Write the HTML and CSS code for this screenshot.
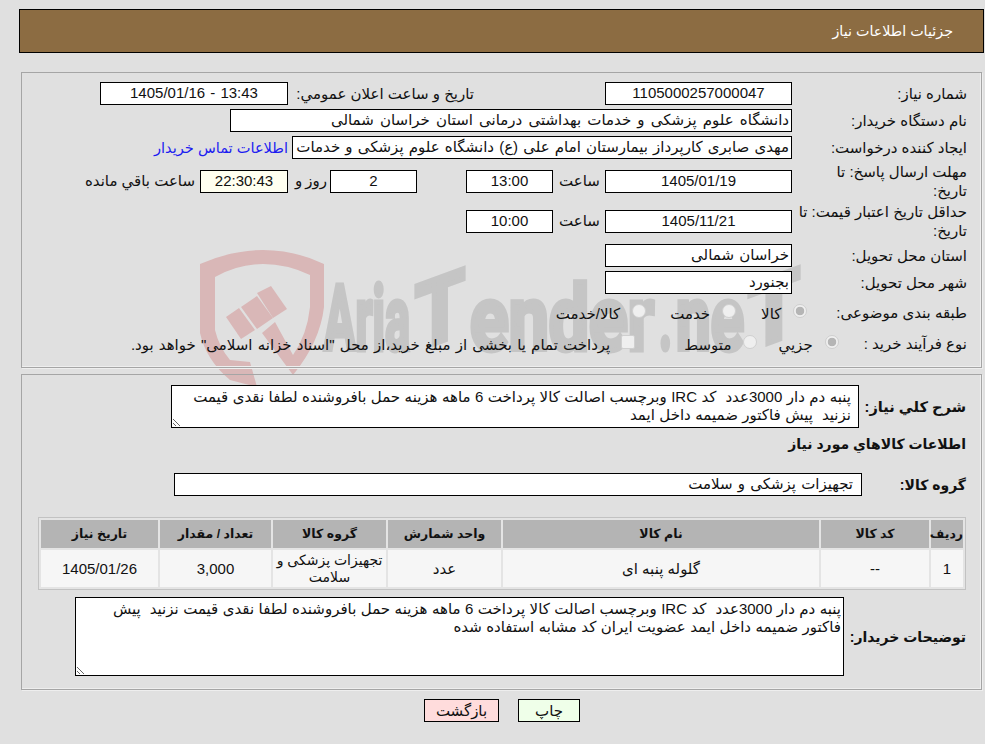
FILE: index.html
```html
<!DOCTYPE html>
<html lang="fa">
<head>
<meta charset="utf-8">
<title>جزئیات اطلاعات نیاز</title>
<link rel="stylesheet" href="styles.css">
</head>
<body>
<svg class="watermark" width="985" height="744" viewBox="0 0 985 744" aria-hidden="true">
  <path class="wm-shield" fill-rule="evenodd" d="M200 264Q232 250 263 250Q295 250 324 264V307Q320 342 293 375L262 333L275 322L293 355Q307 335 310 307V275Q287 264 263 264Q238 264 215 277V330Q219 347 230 360L250 362L257 387L230 380Q206 360 200 333Z"/>
  <polygon class="wm-shield" points="226,317 239,308 255,330 241,339"/>
  <polygon class="wm-shield" points="241,307 257,296 273,318 257,329"/>
  <polygon class="wm-shield" points="257,293 271,286 287,309 273,318"/>
  <text class="wm-text" x="324" y="350" textLength="86" lengthAdjust="spacingAndGlyphs">Aria</text>
  <text class="wm-text" x="415" y="350" textLength="50" lengthAdjust="spacingAndGlyphs" transform="skewY(-20) translate(0 152)">T</text>
  <text class="wm-text" x="470" y="350" textLength="184" lengthAdjust="spacingAndGlyphs">ender</text>
  <text class="wm-text" x="659" y="350" textLength="13" lengthAdjust="spacingAndGlyphs">.</text>
  <text class="wm-text" x="676" y="350" textLength="68" lengthAdjust="spacingAndGlyphs">ne</text>
  <text class="wm-text" x="748" y="350" textLength="52" lengthAdjust="spacingAndGlyphs" transform="skewY(-20) translate(0 273)">T</text>
</svg>

<main class="page" dir="rtl">
  <header class="title-bar">جزئیات اطلاعات نیاز</header>

  <section class="panel panel-info">
    <div class="row row-27">
      <div class="label">شماره نیاز:</div>
      <div class="field field-date center">1105000257000047</div>
      <div class="label-publish">تاریخ و ساعت اعلان عمومي:</div>
      <div class="field field-publish center"><bdi dir="ltr">1405/01/16 - 13:43</bdi></div>
    </div>
    <div class="row row-27">
      <div class="label">نام دستگاه خریدار:</div>
      <div class="field field-org">دانشگاه علوم پزشکی و خدمات بهداشتی درمانی استان خراسان شمالی</div>
    </div>
    <div class="row row-27">
      <div class="label">ایجاد کننده درخواست:</div>
      <div class="field field-creator">مهدی صابری کارپرداز بیمارستان امام علی (ع) دانشگاه علوم پزشکی و خدمات بهداشتی درمانی</div>
      <a class="contact" href="#">اطلاعات تماس خریدار</a>
    </div>
    <div class="row row-40">
      <div class="label">مهلت ارسال پاسخ: تا<br>تاریخ:</div>
      <div class="field field-date center">1405/01/19</div>
      <div class="time-word">ساعت</div>
      <div class="field field-time center">13:00</div>
      <div class="field field-days center">2</div>
      <div class="days-word">روز و</div>
      <div class="field field-remain center">22:30:43</div>
      <div class="remain-word">ساعت باقي مانده</div>
    </div>
    <div class="row row-40">
      <div class="label">حداقل تاریخ اعتبار قیمت: تا تاریخ:</div>
      <div class="field field-date center">1405/11/21</div>
      <div class="time-word">ساعت</div>
      <div class="field field-time center">10:00</div>
    </div>
    <div class="row row-29">
      <div class="label">استان محل تحویل:</div>
      <div class="field field-date">خراسان شمالی</div>
    </div>
    <div class="row row-25">
      <div class="label">شهر محل تحویل:</div>
      <div class="field field-date">بجنورد</div>
    </div>
    <div class="row row-36">
      <div class="label-auto">طبقه بندی موضوعی:</div>
      <span class="radio checked gap-first-a"></span><span class="opt-text">کالا</span>
      <span class="radio gap-next-a"></span><span class="opt-text">خدمت</span>
      <span class="radio gap-next-b"></span><span class="opt-text">کالا/خدمت</span>
    </div>
    <div class="row row-26">
      <div class="label-auto">نوع فرآیند خرید :</div>
      <span class="radio checked gap-first-b"></span><span class="opt-text">جزیي</span>
      <span class="radio gap-next-c"></span><span class="opt-text">متوسط</span>
      <span class="checkbox gap-next-d"></span><span class="opt-text opt-long">پرداخت تمام یا بخشی از مبلغ خرید،از محل "اسناد خزانه اسلامی" خواهد بود.</span>
    </div>
  </section>

  <section class="panel panel-items">
    <div class="row desc-row">
      <div class="label-bold">شرح كلي نياز:</div>
      <textarea class="memo memo-need" readonly>پنبه دم دار 3000عدد  کد IRC وبرچسب اصالت کالا پرداخت 6 ماهه هزینه حمل بافروشنده لطفا نقدی قیمت نزنید  پیش فاکتور ضمیمه داخل ایمد</textarea>
    </div>
    <h2 class="section-title">اطلاعات كالاهاي مورد نياز</h2>
    <div class="row group-row">
      <div class="label-group">گروه کالا:</div>
      <div class="field field-group">تجهیزات پزشکی و سلامت</div>
    </div>
    <table class="items">
      <colgroup>
        <col class="c-idx"><col class="c-code"><col class="c-name"><col class="c-unit"><col class="c-cat"><col class="c-qty"><col class="c-date">
      </colgroup>
      <thead>
        <tr><th>ردیف</th><th>کد کالا</th><th>نام کالا</th><th>واحد شمارش</th><th>گروه کالا</th><th>تعداد / مقدار</th><th>تاریخ نیاز</th></tr>
      </thead>
      <tbody>
        <tr><td>1</td><td>--</td><td>گلوله پنبه ای</td><td>عدد</td><td class="cell-nowrap">تجهیزات پزشکی و<br>سلامت</td><td>3,000</td><td>1405/01/26</td></tr>
      </tbody>
    </table>
    <div class="row buyer-row">
      <div class="label-buyer">توضیحات خریدار:</div>
      <textarea class="memo memo-buyer" readonly>پنبه دم دار 3000عدد  کد IRC وبرچسب اصالت کالا پرداخت 6 ماهه هزینه حمل بافروشنده لطفا نقدی قیمت نزنید  پیش فاکتور ضمیمه داخل ایمد عضویت ایران کد مشابه استفاده شده</textarea>
    </div>
  </section>

  <div class="actions">
    <button class="btn btn-print" type="button">چاپ</button>
    <button class="btn btn-back" type="button">بازگشت</button>
  </div>
</main>
</body>
</html>
```

FILE: styles.css
```css
* { box-sizing: border-box; }

html, body {
  margin: 0;
  padding: 0;
}

body {
  width: 985px;
  height: 744px;
  overflow: hidden;
  position: relative;
  background: #e0e0e0;
  color: #111;
  font-family: "Liberation Sans", "DejaVu Sans", sans-serif;
  font-size: 15px;
  line-height: 18px;
}

.watermark {
  position: absolute;
  left: 0;
  top: 0;
  z-index: 0;
}

.wm-shield { fill: #d9b7b7; }

.wm-text {
  fill: #c5c5c5;
  stroke: #c5c5c5;
  stroke-width: 5px;
  font-family: "Roboto", sans-serif;
  font-weight: 700;
  font-size: 91px;
}

.page {
  position: relative;
  z-index: 1;
  padding-top: 9px;
}

.title-bar {
  height: 44px;
  width: 965px;
  margin: 0 1px 19px 0;
  border: 1px solid #000;
  background: #8c6c42;
  color: #fff;
  font-size: 14.3px;
  padding: 0 30px;
  display: flex;
  align-items: center;
}

.panel {
  width: 961px;
  margin-right: 3px;
  border: 1px solid #a5a5a5;
  box-shadow: inset -1px -1px 0 #eee, 1px 1px 0 #eee;
}

.panel-info {
  height: 296px;
  padding: 7px 14px 0 0;
  margin-bottom: 6px;
}

.panel-items {
  height: 316px;
  padding: 10px 15px 0 0;
}

.row {
  display: flex;
  align-items: center;
}

.row-27 { height: 27px; }
.row-40 { height: 40px; }
.row-29 { height: 29px; }
.row-25 { height: 25px; }
.row-36 { height: 36px; }
.row-26 { height: 26px; }

.label {
  width: 175px;
  flex: none;
  padding-left: 6px;
  line-height: 19px;
}

.label-publish {
  margin-right: 131px;
  width: 186px;
  flex: none;
  white-space: nowrap;
}

.label-auto { flex: none; white-space: nowrap; }

.field {
  height: 23px;
  flex: none;
  background: #fff;
  border: 1px solid #000;
  padding: 0 2px;
  line-height: 20px;
  white-space: nowrap;
  overflow: hidden;
  word-spacing: 1px;
}

.center { text-align: center; }

.field-date { width: 187px; }
.field-publish { width: 188px; }
.field-org { width: 562px; word-spacing: 2px; }
.field-creator { width: 500px; }
.field-time { width: 87px; margin-right: 5px; }
.field-days { width: 87px; margin-right: 49px; }
.field-remain { width: 88px; background: #fffff0; }
.field-group {
  width: 688px;
  padding-right: 8px;
  text-align: right;
}

.contact {
  color: #1c1cf0;
  text-decoration: none;
  font-size: 14.6px;
  margin-right: 4px;
  white-space: nowrap;
}

.time-word {
  width: 47px;
  padding-right: 4px;
  text-align: center;
  flex: none;
}

.days-word {
  width: 42px;
  padding-left: 4px;
  flex: none;
  text-align: center;
  word-spacing: -1px;
}

.remain-word {
  margin-right: 5px;
  white-space: nowrap;
}

.radio, .checkbox {
  width: 14px;
  height: 14px;
  flex: none;
  margin-bottom: 4px;
  border: 1px solid #cfcfcf;
  background: #efefef;
}

.radio { border-radius: 50%; }
.radio.checked { background: radial-gradient(circle, #b5b5b5 0 4px, #efefef 4.6px); }
.checkbox { border-radius: 2px; }

.opt-text {
  margin-right: 12px;
  padding-top: 2px;
  white-space: nowrap;
}

.opt-long { word-spacing: 1px; margin-right: 11px; }

.gap-first-a { margin-right: 29px; }
.gap-first-b { margin-right: 25px; }
.gap-next-a { margin-right: 25px; }
.gap-next-b { margin-right: 24px; }
.gap-next-c { margin-right: 21px; }
.gap-next-d { margin-right: 49px; }

.label-bold, .label-group, .label-buyer, .section-title {
  font-weight: 700;
  font-size: 14px;
  white-space: nowrap;
}

.desc-row { height: 43px; }
.label-bold { width: 107px; flex: none; font-size: 14.6px; }

.memo {
  flex: none;
  display: block;
  background: #fff;
  border: 1px solid #000;
  border-radius: 0;
  margin: 0;
  color: #111;
  font: inherit;
  line-height: 18px;
  word-spacing: 0.3px;
  outline: 0;
}

.memo-need { width: 688px; height: 43px; padding: 2px 7px 2px 20px; }
.memo-buyer { width: 769px; height: 79px; padding: 2px; }

.section-title {
  margin: 0;
  height: 32px;
  line-height: 32px;
}

.group-row {
  height: 23px;
  margin-top: 13px;
}
.label-group { width: 104px; flex: none; }

.items {
  direction: rtl;
  table-layout: fixed;
  width: 928px;
  margin: 21px 0 0 0;
  border: 1px solid #c2c2c2;
  border-spacing: 2px;
  background: #e4e4e4;
}

.c-idx { width: 32px; }
.c-code { width: 108px; }
.c-name { width: 316px; }
.c-unit { width: 113px; }
.c-cat { width: 113px; }
.c-qty { width: 111px; }
.c-date { width: 117px; }

.items th, .items td {
  padding: 0;
  text-align: center;
}

.items th {
  height: 28px;
  background: #b4b4b4;
  font-weight: 700;
  font-size: 12.5px;
}

.items td {
  height: 37px;
  background: #f6f6f6;
  font-size: 15px;
  line-height: 17px;
}

.items .cell-nowrap { white-space: nowrap; font-size: 14px; }

.buyer-row {
  height: 79px;
  margin-top: 7px;
}

.label-buyer { width: 122px; flex: none; }

.actions {
  display: flex;
  justify-content: center;
  gap: 19px;
  margin-top: 9px;
  padding-left: 19px;
}

.btn {
  height: 23px;
  border: 1px solid #000;
  border-radius: 0;
  padding: 0;
  color: #111;
  font: inherit;
}

.btn-print { width: 62px; background: #efffe9; }
.btn-back { width: 75px; background: #ffdcdc; }
```
